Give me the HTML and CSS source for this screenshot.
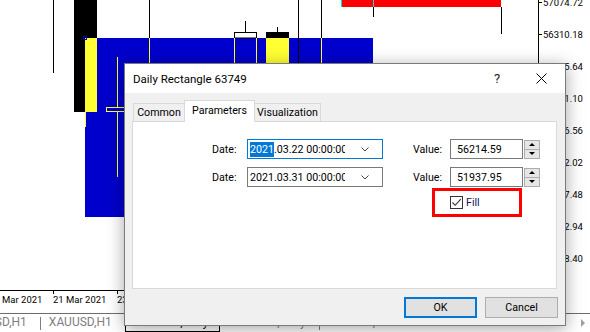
FILE: index.html
```html
<!DOCTYPE html>
<html>
<head>
<meta charset="utf-8">
<link rel="stylesheet" href="styles.css">
</head>
<body>
<div class="screen">
  <div class="chart">
    <svg class="chart-svg" width="590" height="313" viewBox="0 0 590 313">
      <rect x="0" y="0" width="590" height="313" fill="#fff"/>
      <rect x="85" y="38" width="288" height="179" fill="#0000cc"/>
      <line x1="53.5" y1="0" x2="53.5" y2="73" stroke="#000"/>
      <rect x="74" y="0" width="11" height="112" fill="#000"/>
      <rect x="85" y="0" width="12" height="38" fill="#000"/>
      <rect x="85" y="38" width="12" height="74" fill="#ffff33"/>
      <line x1="85.5" y1="112" x2="85.5" y2="127" stroke="#ffff33"/>
      <rect x="83.5" y="36.5" width="3" height="3" fill="none" stroke="#0000cc"/>
      <line x1="117.5" y1="57" x2="117.5" y2="177" stroke="#ffff33"/>
      <rect x="106.5" y="107.5" width="22" height="4" fill="#0000cc" stroke="#ffff33"/>
      <line x1="149.5" y1="0" x2="149.5" y2="38" stroke="#000"/>
      <line x1="149.5" y1="38" x2="149.5" y2="217" stroke="#ffff33"/>
      <line x1="245.5" y1="21" x2="245.5" y2="32" stroke="#000"/>
      <rect x="234.5" y="32.5" width="22" height="5.5" fill="#fff" stroke="#000"/>
      <line x1="234.5" y1="38" x2="234.5" y2="140" stroke="#ffff33"/>
      <line x1="256.5" y1="38" x2="256.5" y2="140" stroke="#ffff33"/>
      <line x1="277.5" y1="27" x2="277.5" y2="32" stroke="#000"/>
      <rect x="266" y="32" width="23" height="6" fill="#000"/>
      <rect x="266" y="38" width="23" height="100" fill="#ffff33"/>
      <line x1="298.5" y1="0" x2="298.5" y2="70" stroke="#000"/>
      <line x1="321.5" y1="0" x2="321.5" y2="38" stroke="#000"/>
      <line x1="321.5" y1="38" x2="321.5" y2="140" stroke="#ffff33"/>
      <rect x="341" y="0" width="160" height="7" fill="#ff0000"/>
      <line x1="341.5" y1="0" x2="341.5" y2="7" stroke="#00e0e0"/>
      <line x1="373.5" y1="0" x2="373.5" y2="7" stroke="#00e0e0"/>
      <line x1="373.5" y1="7" x2="373.5" y2="17" stroke="#000"/>
      <line x1="501.5" y1="7" x2="501.5" y2="34" stroke="#000"/>

      <line x1="538.5" y1="0" x2="538.5" y2="313" stroke="#000"/>
      <line x1="0" y1="290.5" x2="538" y2="290.5" stroke="#000"/>

      <g stroke="#000">
        <line x1="538" y1="2.5" x2="542" y2="2.5"/>
        <line x1="538" y1="34.5" x2="542" y2="34.5"/>
        <line x1="538" y1="66.5" x2="542" y2="66.5"/>
        <line x1="538" y1="98.5" x2="542" y2="98.5"/>
        <line x1="538" y1="130.5" x2="542" y2="130.5"/>
        <line x1="538" y1="162.5" x2="542" y2="162.5"/>
        <line x1="538" y1="194.5" x2="542" y2="194.5"/>
        <line x1="538" y1="226.5" x2="542" y2="226.5"/>
        <line x1="538" y1="258.5" x2="542" y2="258.5"/>
        <line x1="53.5" y1="290" x2="53.5" y2="294"/>
        <line x1="117.5" y1="290" x2="117.5" y2="294"/>
      </g>
      <g class="axis-txt">
        <text x="543" y="6">57074.72</text>
        <text x="543" y="38">56310.18</text>
        <text x="543" y="70">55545.64</text>
        <text x="543" y="102">54781.10</text>
        <text x="543" y="134">54016.56</text>
        <text x="543" y="166">53252.02</text>
        <text x="543" y="198">52487.48</text>
        <text x="543" y="230">51722.94</text>
        <text x="543" y="262">50958.40</text>
        <text x="-11" y="303">19 Mar 2021</text>
        <text x="53" y="303">21 Mar 2021</text>
        <text x="117" y="303">23 Mar 2021</text>
      </g>
    </svg>
  </div>

  <div class="tabbar">
    <span class="tab lead">EURUSD,H1</span><span class="sep"></span>
    <span class="tab">XAUUSD,H1</span>
    <span class="tab active">BTCUSD,Daily</span>
    <span class="tab">AUDUSD,Daily</span><span class="sep"></span>
    <span class="tab">AUDCHF,M5</span>
    <span class="scroll-arrow"></span>
  </div>

  <div class="dialog">
    <div class="titlebar">
      <span class="title">Daily Rectangle 63749</span>
      <span class="tb-btn help">?</span>
      <span class="tb-btn close"><svg width="11" height="11" viewBox="0 0 11 11"><path d="M0.5 0.5 L10.5 10.5 M10.5 0.5 L0.5 10.5" stroke="#000" fill="none"/></svg></span>
    </div>
    <div class="dlg-body">
      <div class="tabs">
        <div class="dtab t-common">Common</div>
        <div class="dtab t-params active">Parameters</div>
        <div class="dtab t-vis">Visualization</div>
      </div>
      <div class="panel">
        <div class="params">
          <div class="prow">
            <span class="lbl lbl-date">Date:</span>
            <div class="dt focus">
              <span class="dt-text"><span class="sel">2021</span>.03.22 00:00:00</span>
              <svg class="chev" width="8" height="5" viewBox="0 0 8 5"><path d="M0.5 0.5 L4 4 L7.5 0.5" stroke="#444" fill="none"/></svg>
            </div>
            <span class="lbl lbl-value">Value:</span>
            <div class="num">56214.59</div>
            <div class="spin"><span class="sp up"><i></i></span><span class="sp down"><i></i></span></div>
          </div>
          <div class="prow">
            <span class="lbl lbl-date">Date:</span>
            <div class="dt">
              <span class="dt-text">2021.03.31 00:00:00</span>
              <svg class="chev" width="8" height="5" viewBox="0 0 8 5"><path d="M0.5 0.5 L4 4 L7.5 0.5" stroke="#444" fill="none"/></svg>
            </div>
            <span class="lbl lbl-value">Value:</span>
            <div class="num">51937.95</div>
            <div class="spin"><span class="sp up"><i></i></span><span class="sp down"><i></i></span></div>
          </div>
          <div class="fill-row">
            <div class="hl">
              <span class="cb"><svg width="11" height="11" viewBox="0 0 11 11"><path d="M1.5 5.5 L4.2 8.3 L9.8 2.2" stroke="#333" stroke-width="1.1" fill="none"/></svg></span>
              <span class="fill-lbl">Fill</span>
            </div>
          </div>
        </div>
      </div>
      <div class="footer">
        <button class="btn default">OK</button>
        <button class="btn">Cancel</button>
      </div>
    </div>
  </div>
</div>
</body>
</html>
```

FILE: styles.css
```css
* { box-sizing: border-box; }
html, body { margin: 0; padding: 0; }
body { width: 590px; height: 332px; overflow: hidden; background: #fff; }

.screen {
  position: relative;
  width: 590px;
  height: 332px;
  display: grid;
  grid-template-rows: 313px 19px;
  overflow: hidden;
  font-family: Roboto, "Liberation Sans", sans-serif;
}
.chart { overflow: hidden; }
.chart-svg { display: block; }
.axis-txt { font-family: Roboto, "Liberation Sans", sans-serif; font-size: 9.5px; fill: #000; }

.tabbar {
  display: flex;
  border-top: 1px solid #6d6d6d;
  background: #fff;
  font-size: 12px;
  color: #808080;
  line-height: 17px;
  white-space: nowrap;
}
.tab { padding: 0 13px 0 8px; }
.tab.lead { margin-left: -43px; }
.sep { width: 1px; background: #808080; margin: 3px 0 2px; }
.tab.active {
  width: 95px;
  margin-top: -1px;
  border: 1px solid #000;
  border-top: none;
  background: #fff;
  color: #000;
  padding: 1px 0 0;
  text-align: center;
}
.active + .tab { padding-left: 12px; }
.scroll-arrow {
  margin-left: auto;
  margin-right: 5px;
  align-self: center;
  width: 0;
  height: 0;
  border-left: 4px solid #a0a0a0;
  border-top: 4px solid transparent;
  border-bottom: 4px solid transparent;
}

.dialog {
  position: absolute;
  left: 124px;
  top: 63px;
  width: 442px;
  height: 263px;
  border: 1px solid #7a7a7a;
  background: #f0f0f0;
  box-shadow: 0 3px 16px rgba(0, 0, 0, 0.35);
  display: flex;
  flex-direction: column;
  color: #000;
}
.titlebar {
  height: 29px;
  background: #fff;
  display: flex;
  align-items: center;
  padding-left: 8px;
  font-size: 11.5px;
}
.title { flex: 1; }
.tb-btn {
  width: 44px;
  height: 29px;
  display: flex;
  align-items: center;
  justify-content: center;
}
.help { font-size: 13px; color: #222; }
.close { margin-right: 2px; }

.dlg-body {
  flex: 1;
  display: flex;
  flex-direction: column;
  padding: 7px 8px 7px 7px;
  font-size: 10.67px;
}
.tabs {
  display: flex;
  align-items: flex-end;
  height: 22px;
  margin: 0 0 -1px 1px;
  position: relative;
  z-index: 1;
}
.dtab {
  height: 18px;
  margin-bottom: 1px;
  border: 1px solid #d9d9d9;
  border-bottom: none;
  background: #f0f0f0;
  display: flex;
  align-items: center;
  justify-content: center;
  margin-left: -1px;
}
.dtab:first-child { margin-left: 0; }
.t-common { width: 52px; }
.t-params { width: 71px; }
.t-vis { width: 67px; }
.dtab.active {
  height: 22px;
  margin-bottom: 0;
  background: #fff;
  position: relative;
  z-index: 1;
  padding-bottom: 3px;
}
.panel {
  height: 168px;
  background: #fff;
  border: 1px solid #d9d9d9;
}
.params { padding: 17px 0 0 79px; }
.prow { display: flex; align-items: center; height: 20px; }
.prow + .prow { margin-top: 8px; }
.lbl-date { width: 35px; }
.dt {
  width: 136px;
  height: 20px;
  border: 1px solid #7a7a7a;
  background: #fff;
  display: flex;
  align-items: center;
  padding-left: 2px;
}
.dt.focus { border-color: #0078d7; }
.dt-text { width: 95px; overflow: hidden; white-space: nowrap; line-height: 15px; }
.sel { background: #0078d7; color: #fff; display: inline-block; line-height: 15px; }
.chev { margin-left: auto; margin-right: 13px; display: block; }
.lbl-value { margin-left: 30px; width: 37px; }
.num {
  width: 73px;
  height: 20px;
  border: 1px solid #7a7a7a;
  background: #fff;
  padding-left: 6px;
  display: flex;
  align-items: center;
}
.spin {
  margin-left: 1px;
  width: 16px;
  height: 19px;
  display: flex;
  flex-direction: column;
}
.sp {
  flex: 1;
  background: #e6e6e6;
  border: 1px solid #adadad;
  display: flex;
  align-items: center;
  justify-content: center;
}
.sp + .sp { border-top: none; }
.sp i { display: block; width: 0; height: 0; border-left: 3px solid transparent; border-right: 3px solid transparent; }
.up i { border-bottom: 3px solid #000; }
.down i { border-top: 3px solid #000; }

.fill-row { margin: 1px 0 0 220px; }
.hl {
  width: 90px;
  height: 29px;
  border: 3px solid #ff0000;
  display: flex;
  align-items: center;
  padding-left: 15px;
}
.cb {
  width: 13px;
  height: 13px;
  border: 1px solid #333;
  background: #fff;
  display: flex;
}
.cb svg { display: block; }
.fill-lbl { margin-left: 3px; color: #14145a; }

.footer {
  margin-top: 8px;
  margin-right: -1px;
  display: flex;
  justify-content: flex-end;
  gap: 8px;
}
.btn {
  width: 73px;
  height: 21px;
  border: 1px solid #adadad;
  background: #e1e1e1;
  font: inherit;
  color: #000;
  padding: 0;
}
.btn.default { border: 2px solid #0078d7; }
```
